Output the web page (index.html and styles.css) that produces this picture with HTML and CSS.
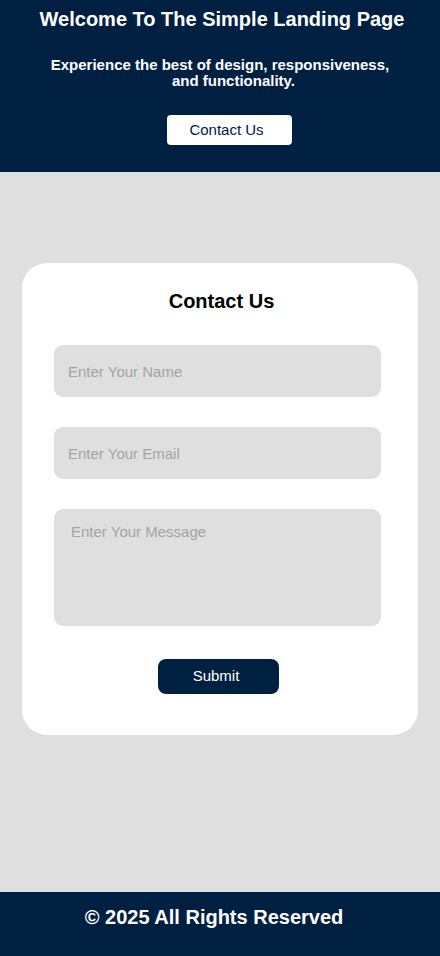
FILE: index.html
```html
<!DOCTYPE html>
<html lang="en">
<head>
<meta charset="utf-8">
<title>Simple Landing Page</title>
<link rel="stylesheet" href="styles.css">
</head>
<body>
<header class="hero">
  <h1 class="hero-title">Welcome To The Simple Landing Page</h1>
  <p class="hero-sub">Experience the best of design, responsiveness,<br><span class="hero-sub-2">and functionality.</span></p>
  <a class="hero-btn" href="#contact">Contact Us</a>
</header>
<main class="main">
  <section class="card" id="contact">
    <h2 class="card-title">Contact Us</h2>
    <form class="form">
      <input class="field" type="text" placeholder="Enter Your Name">
      <input class="field" type="email" placeholder="Enter Your Email">
      <textarea class="field area" placeholder="Enter Your Message"></textarea>
      <button class="submit" type="button">Submit</button>
    </form>
  </section>
</main>
<footer class="footer">
  <p class="footer-text">© 2025 All Rights Reserved</p>
</footer>
</body>
</html>
```
FILE: styles.css
```css
* { box-sizing: border-box; }
html, body { margin: 0; padding: 0; }
body {
  font-family: "Liberation Sans", Arial, sans-serif;
  background: #dfdfdf;
  display: flex;
  flex-direction: column;
  min-height: 956px;
}
.hero {
  background: #002042;
  color: #fff;
  text-align: center;
  padding: 8px 20px 27px 24px;
  display: flex;
  flex-direction: column;
  align-items: center;
}
.hero-title {
  font-size: 20px;
  font-weight: bold;
  margin: 0;
  line-height: 23px;
}
.hero-sub {
  font-size: 15px;
  font-weight: bold;
  line-height: 16px;
  margin: 26px 0 0 -4px;
}
.hero-sub-2 { padding-left: 27px; }
.hero-btn {
  display: block;
  margin-top: 26px;
  margin-left: 14px;
  width: 125px;
  height: 30px;
  line-height: 30px;
  padding-right: 5px;
  background: #fff;
  color: #002042;
  text-decoration: none;
  font-size: 15px;
  border-radius: 4px;
}
.main {
  flex: 1;
  padding: 91px 22px 157px;
}
.card {
  background: #fff;
  border-radius: 25px;
  padding: 27px 37px 41px 32px;
}
.card-title {
  margin: 0 0 0 8px;
  text-align: center;
  font-size: 20px;
  line-height: 23px;
  font-weight: bold;
  color: #000;
}
.form {
  display: flex;
  flex-direction: column;
  align-items: center;
  gap: 30px;
  margin-top: 32px;
}
.field {
  width: 327px;
  height: 52px;
  border: none;
  border-radius: 9px;
  background: #dfdfdf;
  font-family: "Liberation Sans", Arial, sans-serif;
  font-size: 15px;
  padding: 0 14px;
  color: #333;
  outline: none;
}
.field::placeholder { color: #a3a3a3; }
.area {
  height: 117px;
  resize: none;
  padding: 14px 17px;
  line-height: 17px;
}
.submit {
  margin-top: 3px;
  margin-left: 2px;
  width: 121px;
  height: 35px;
  padding: 0 5px 3px 0;
  background: #002042;
  color: #fff;
  border: none;
  border-radius: 8px;
  font-family: "Liberation Sans", Arial, sans-serif;
  font-size: 15px;
}
.footer {
  background: #002042;
  color: #fff;
  text-align: center;
  height: 64px;
  padding: 14px 12px 0 0;
}
.footer-text {
  margin: 0;
  font-size: 20px;
  font-weight: bold;
  line-height: 23px;
}
```
